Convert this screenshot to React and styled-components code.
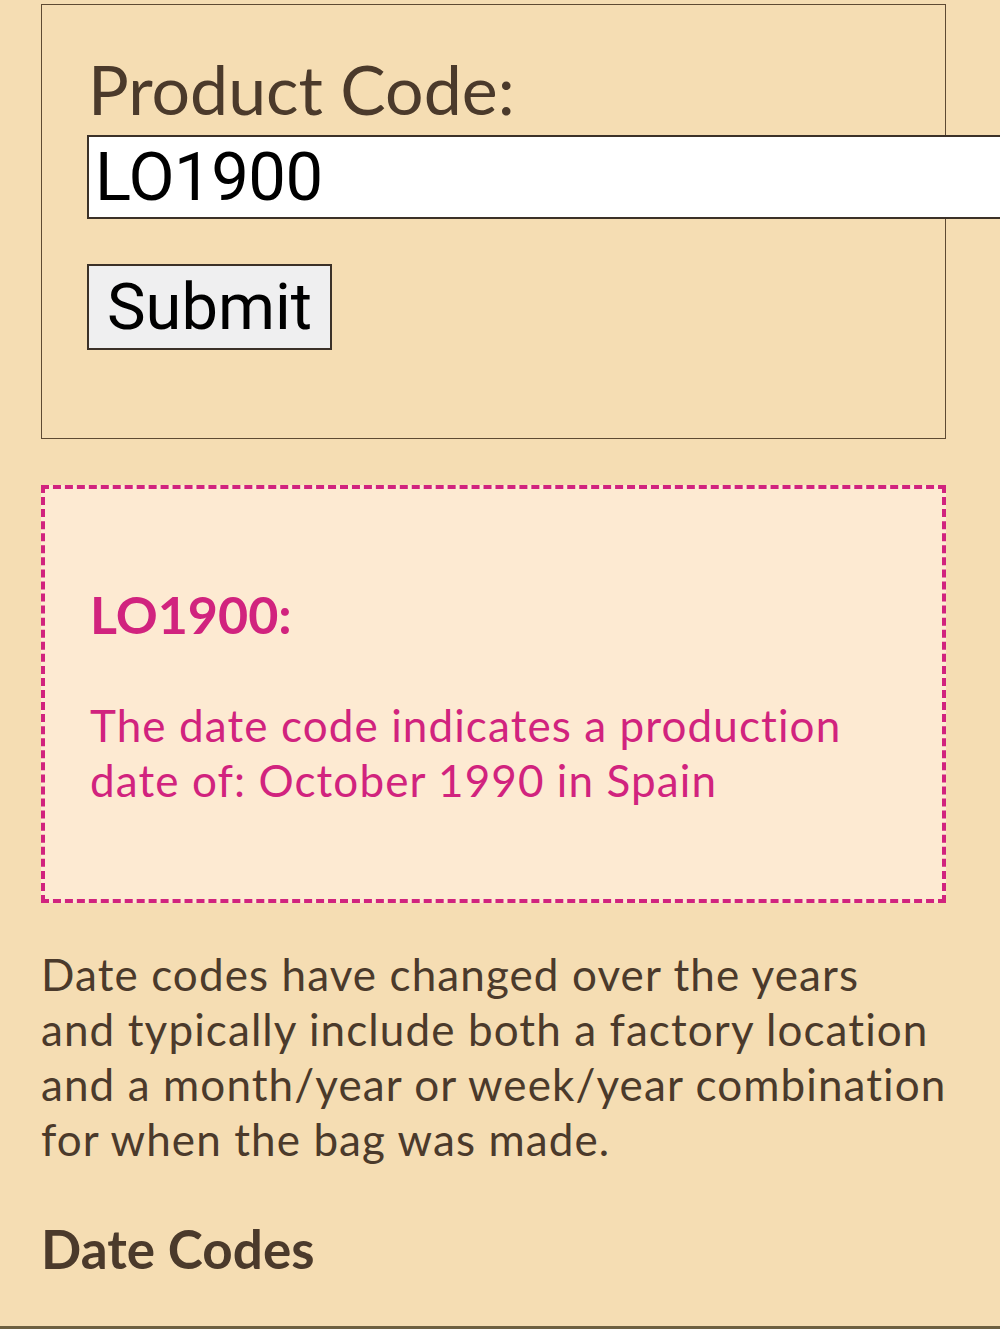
import React from "react";
import styled, { createGlobalStyle } from "styled-components";

const GlobalStyle = createGlobalStyle`
  html, body {
    margin: 0;
    padding: 0;
    background: #f5ddb3;
    overflow-x: hidden;
  }
  body {
    font-family: "Lato", "Open Sans", sans-serif;
    color: #4b3a2b;
  }
`;

const Page = styled.main`
  padding: 4px 54px 0 41px;
`;

const LookupForm = styled.form`
  border: 1.5px solid #5e4a33;
  padding: 50px 0 88px 46px;
  margin: 0;
`;

const FieldLabel = styled.label`
  display: block;
  font-size: 68px;
  line-height: 68px;
  color: #4b3a2b;
`;

const CodeInput = styled.input`
  display: block;
  box-sizing: border-box;
  width: 960px;
  height: 84px;
  margin: 12px 0 0 -1px;
  padding: 0 6px;
  border: 2px solid #3b3128;
  background: #fff;
  font-family: Roboto, "Liberation Sans", sans-serif;
  font-size: 67px;
  letter-spacing: -0.5px;
  color: #000;
  outline: none;
`;

const SubmitButton = styled.button`
  display: block;
  box-sizing: border-box;
  height: 86px;
  margin: 45px 0 0 -1px;
  padding: 0 18px;
  border: 2px solid #3b3128;
  background: #efeff0;
  font-family: Roboto, "Liberation Sans", sans-serif;
  font-size: 65px;
  line-height: 1;
  color: #000;
`;

const ResultBox = styled.section`
  margin-top: 46px;
  border: 4px dashed #d1237e;
  background: #fdead2;
  padding: 93px 40px 91px 45px;
  color: #d1237e;
`;

const ResultTitle = styled.h2`
  margin: 0;
  font-size: 52px;
  line-height: 64px;
  font-weight: 700;
`;

const Text = styled.p`
  margin: ${(p) => p.$top || 0}px 0 0;
  font-size: 44px;
  line-height: 55px;
  letter-spacing: ${(p) => p.$spacing ?? 1.1}px;
  color: ${(p) => p.$color || "inherit"};
`;

const Intro = styled(Text)`
  margin-right: -40px;
  white-space: nowrap;
`;

const SectionTitle = styled.h3`
  margin: 50px 0 0;
  font-size: 53px;
  line-height: 64px;
  font-weight: 700;
  color: #4b3a2b;
`;

const Divider = styled.hr`
  margin: 45px -54px 0 -41px;
  border: 0;
  border-top: 3px solid #6e6040;
`;

const introLines = [
  "Date codes have changed over the years",
  "and typically include both a factory location",
  "and a month/year or week/year combination",
  "for when the bag was made.",
];

export default function App() {
  return (
    <>
      <GlobalStyle />
      <Page>
        <LookupForm onSubmit={(e) => e.preventDefault()}>
          <FieldLabel htmlFor="code">Product Code:</FieldLabel>
          <CodeInput id="code" defaultValue="LO1900" />
          <SubmitButton type="submit">Submit</SubmitButton>
        </LookupForm>

        <ResultBox>
          <ResultTitle>LO1900:</ResultTitle>
          <Text $top={52}>
            The date code indicates a production date of: October 1990 in Spain
          </Text>
        </ResultBox>

        <Intro $top={44} $spacing={1.1} $color="#4b3a2b">
          {introLines.map((line, i) => (
            <React.Fragment key={i}>
              {line}
              {i < introLines.length - 1 && <br />}
            </React.Fragment>
          ))}
        </Intro>

        <SectionTitle>Date Codes</SectionTitle>
        <Divider />
      </Page>
    </>
  );
}
